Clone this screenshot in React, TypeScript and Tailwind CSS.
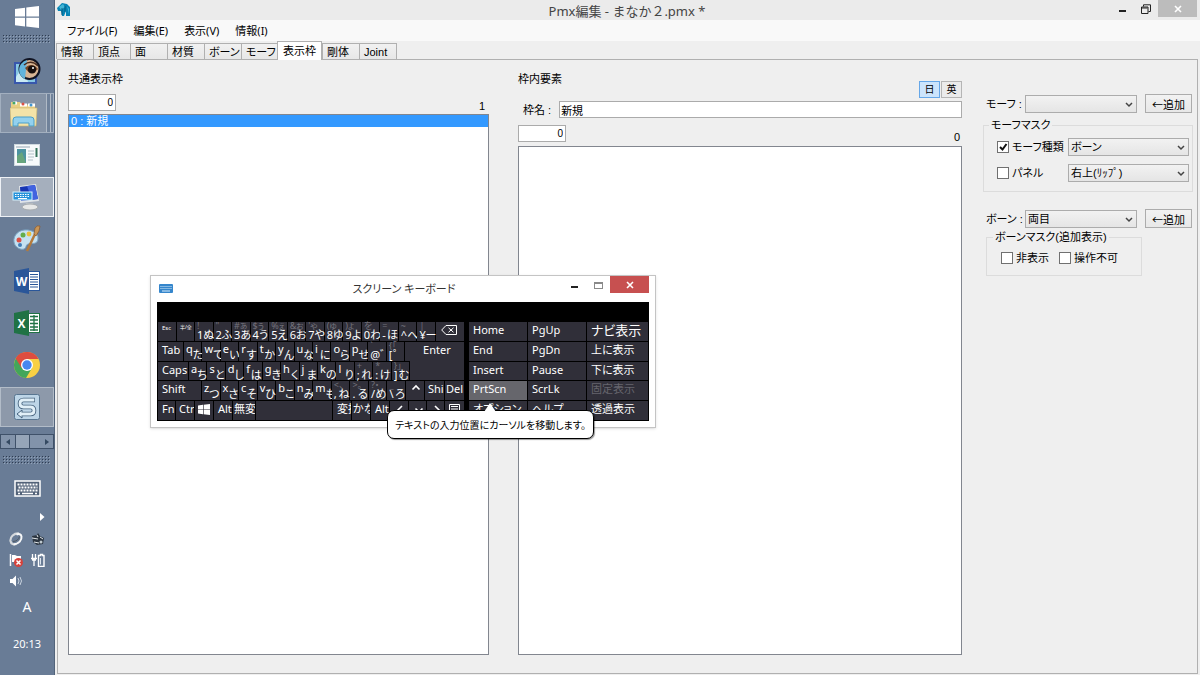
import React from "react";

type LetterKey = { main: string; kana: string; shift?: string };

const numberKeys: LetterKey[] = [
  { main: "1", kana: "ぬ", shift: "!" },
  { main: "2", kana: "ふ", shift: "\"" },
  { main: "3", kana: "あ", shift: "#ぁ" },
  { main: "4", kana: "う", shift: "$ぅ" },
  { main: "5", kana: "え", shift: "%ぇ" },
  { main: "6", kana: "お", shift: "&ぉ" },
  { main: "7", kana: "や", shift: "'ゃ" },
  { main: "8", kana: "ゆ", shift: "(ゅ" },
  { main: "9", kana: "よ", shift: ")ょ" },
  { main: "0", kana: "わ", shift: " を" },
  { main: "-", kana: "ほ", shift: "=" },
  { main: "^", kana: "へ", shift: "~" },
  { main: "¥", kana: "ー", shift: "|" },
];

const topKeys: LetterKey[] = [
  { main: "q", kana: "た" },
  { main: "w", kana: "て" },
  { main: "e", kana: "い" },
  { main: "r", kana: "す" },
  { main: "t", kana: "か" },
  { main: "y", kana: "ん" },
  { main: "u", kana: "な" },
  { main: "i", kana: "に" },
  { main: "o", kana: "ら" },
  { main: "p", kana: "せ" },
  { main: "@", kana: "゛", shift: "`" },
  { main: "[", kana: "゜", shift: "{「" },
];

const homeKeys: LetterKey[] = [
  { main: "a", kana: "ち" },
  { main: "s", kana: "と" },
  { main: "d", kana: "し" },
  { main: "f", kana: "は" },
  { main: "g", kana: "き" },
  { main: "h", kana: "く" },
  { main: "j", kana: "ま" },
  { main: "k", kana: "の" },
  { main: "l", kana: "り" },
  { main: ";", kana: "れ", shift: "+" },
  { main: ":", kana: "け", shift: "*" },
  { main: "]", kana: "む", shift: "}」" },
];

const bottomKeys: LetterKey[] = [
  { main: "z", kana: "つ" },
  { main: "x", kana: "さ" },
  { main: "c", kana: "そ" },
  { main: "v", kana: "ひ" },
  { main: "b", kana: "こ" },
  { main: "n", kana: "み" },
  { main: "m", kana: "も" },
  { main: ",", kana: "ね", shift: "<、" },
  { main: ".", kana: "る", shift: ">。" },
  { main: "/", kana: "め", shift: "?・" },
  { main: "\\", kana: "ろ", shift: "_" },
];

const keyBase = "min-w-0 overflow-hidden whitespace-nowrap bg-[#302f39] text-left text-white";

function Char({ k }: { k: LetterKey }) {
  const low = Boolean(k.shift);
  return (
    <button className="relative flex min-w-0 flex-1 justify-between whitespace-nowrap bg-[#302f39] pl-0.5 text-[11px] leading-[14px] text-white">
      {k.shift && (
        <span className="absolute left-0.5 top-[-2px] text-[9px] leading-[12px] text-[#73727b]">{k.shift}</span>
      )}
      <span className={low ? "pt-1.5" : ""}>{k.main}</span>
      <span className="pt-1.5">{k.kana}</span>
    </button>
  );
}

function Key({ w, children, className = "" }: { w: string; children?: React.ReactNode; className?: string }) {
  return (
    <button className={`${keyBase} ${w} flex shrink-0 items-start pl-1 pt-px text-[11px] leading-[14px] ${className}`}>
      {children}
    </button>
  );
}

function Nav({ children, className = "bg-[#302f39] text-[11px] text-white" }: { children: string; className?: string }) {
  return (
    <button className={`flex min-w-0 items-start overflow-hidden whitespace-nowrap pl-1 pt-px leading-[14px] ${className}`}>
      {children}
    </button>
  );
}

function Arrow({ d }: { d: string }) {
  return (
    <svg viewBox="0 0 12 12" className="mt-px size-3 shrink-0" fill="none" stroke="white" strokeWidth="1.6">
      <path d={d} />
    </svg>
  );
}

function WindowsLogo({ className }: { className: string }) {
  return (
    <svg viewBox="0 0 24 22" className={className} fill="white">
      <path d="M0 3 10 1.7V10.4H0zM11.3 1.5 24 0v10.4H11.3zM0 11.7h10v8.8L0 19.2zM11.3 11.7H24V22l-12.7-1.6z" />
    </svg>
  );
}

function KeyboardWindow() {
  return (
    <section
      aria-label="スクリーン キーボード"
      className="absolute left-[150px] top-[275px] w-[506px] border border-[#c4c4c4] bg-white px-1.5 pb-1.5 font-['Noto_Sans','Noto_Sans_CJK_JP',sans-serif] shadow-sm"
    >
      <header className="flex h-[26px] items-start">
        <div className="flex flex-1 items-center pl-0.5 pt-2">
          <svg viewBox="0 0 14 9" className="h-[9px] w-[14px]">
            <rect width="14" height="9" rx="1" fill="#3586cc" />
            <path d="M1.5 2.5h11M1.5 4.5h11" stroke="#d8ecfb" strokeDasharray="1 1" />
            <path d="M3 7h8" stroke="#d8ecfb" />
          </svg>
        </div>
        <h2 className="pt-1 text-[11px] leading-[18px] text-[#333]">スクリーン キーボード</h2>
        <div className="flex flex-1 justify-end">
          <button aria-label="最小化" className="flex h-[17px] w-6 items-center justify-center pt-1">
            <span className="h-0.5 w-[7px] bg-[#222]" />
          </button>
          <button aria-label="最大化" className="flex h-[18px] w-6 items-center justify-center">
            <span className="h-[7px] w-[9px] border border-t-2 border-[#8a8a8a]" />
          </button>
          <button aria-label="閉じる" className="flex h-[17px] w-[39px] items-center justify-center bg-[#c75050]">
            <svg viewBox="0 0 8 8" className="size-2" stroke="white" strokeWidth="1.6">
              <path d="M1 1l6 6M7 1 1 7" />
            </svg>
          </button>
        </div>
      </header>
      <div className="bg-black px-px pb-px pt-5">
        <div className="flex h-[98px] gap-[5px]">
          <div className="grid w-[306px] shrink-0 grid-cols-1 grid-rows-5 gap-px">
            <div className="flex min-h-0 gap-px">
              <button className={`${keyBase} w-[18px] shrink-0 pb-1.5 pl-1 text-[6px] leading-[8px]`}>Esc</button>
              <button className={`${keyBase} w-[17px] shrink-0 pb-2 pl-[3px] text-[5px] leading-[8px]`}>半/全</button>
              {numberKeys.map((k) => (
                <Char key={k.main} k={k} />
              ))}
              <Key w="w-[28px]" className="pl-[5px]">
                <svg viewBox="0 0 16 10" className="mt-0.5 h-[10px] w-4" fill="none" stroke="white">
                  <path d="M5 .5h10.500v9H5L.7 5zM7.500 2.800l5 4.500M12.500 2.800l-5 4.500" />
                </svg>
              </Key>
            </div>
            <div className="flex min-h-0 gap-px">
              <Key w="w-[25px]">Tab</Key>
              {topKeys.map((k) => (
                <Char key={k.main} k={k} />
              ))}
              <Key w="w-[59px]" className="pl-[18px] pt-0.5">
                Enter
              </Key>
            </div>
            <div className="flex min-h-0 gap-px">
              <Key w="w-[30px]">Caps</Key>
              {homeKeys.map((k) => (
                <Char key={k.main} k={k} />
              ))}
              <Key w="w-[54px]" className="-mt-px" />
            </div>
            <div className="flex min-h-0 gap-px">
              <Key w="w-[43px]">Shift</Key>
              {bottomKeys.map((k) => (
                <Char key={k.main} k={k} />
              ))}
              <Key w="w-[18px]">
                <Arrow d="M2.500 6.500 6 3l3.500 3.500" />
              </Key>
              <Key w="w-[19px]" className="pl-[3px]">Shi</Key>
              <Key w="w-[19px]" className="pl-px">Del</Key>
            </div>
            <div className="flex min-h-0 gap-px">
              <Key w="w-[17px]">Fn</Key>
              <Key w="w-[18px]" className="pl-[3px]">Ctr</Key>
              <Key w="w-[18px]" className="pl-[3px]">
                <WindowsLogo className="mt-0.5 h-[11px] w-3 shrink-0" />
              </Key>
              <Key w="w-[18px]" className="pl-0.5">Alt</Key>
              <Key w="w-[22px]" className="pl-px">無変</Key>
              <button aria-label="スペース" className={`${keyBase} flex-1`} />
              <Key w="w-[18px]">変換</Key>
              <Key w="w-[18px]" className="pl-px">かな</Key>
              <Key w="w-[18px]" className="pl-0.5">Alt</Key>
              <Key w="w-[18px]">
                <Arrow d="M8 3 4 7l4 4" />
              </Key>
              <Key w="w-[17px]">
                <Arrow d="M2.500 5.500 6 9l3.500-3.500" />
              </Key>
              <Key w="w-[17px]">
                <Arrow d="M4 3l4 4-4 4" />
              </Key>
              <Key w="w-[19px]">
                <svg viewBox="0 0 11 11" className="mt-0.5 size-[11px] shrink-0" fill="none" stroke="white">
                  <path d="M.5.5h10v10H.5zM2 2.500h7M2 5h7M2 7.500h7" />
                </svg>
              </Key>
            </div>
          </div>
          <div className="grid min-w-0 flex-1 grid-cols-[58px_58px_1fr] grid-rows-5 gap-px">
            <Nav>Home</Nav>
            <Nav>PgUp</Nav>
            <Nav className="bg-[#302f39] pt-[3px] text-[13px] text-white">ナビ表示</Nav>
            <Nav>End</Nav>
            <Nav>PgDn</Nav>
            <Nav>上に表示</Nav>
            <Nav>Insert</Nav>
            <Nav>Pause</Nav>
            <Nav>下に表示</Nav>
            <Nav className="bg-[#66666c] text-[11px] text-white">PrtScn</Nav>
            <Nav>ScrLk</Nav>
            <Nav className="bg-[#302f39] text-[11px] text-[#66656d]">固定表示</Nav>
            <Nav>オプション</Nav>
            <Nav>ヘルプ</Nav>
            <Nav>透過表示</Nav>
          </div>
        </div>
      </div>
      <div
        role="tooltip"
        className="absolute left-[236px] top-[134px] flex h-[29px] w-[207px] items-center justify-center rounded-[7px] border border-black bg-white shadow-[1px_1px_1px_#0006]"
      >
        <svg viewBox="0 0 12 9" className="absolute left-[96px] top-[-8px] h-[9px] w-3">
          <path d="M0 9 6 0l6 9z" fill="white" />
        </svg>
        <span className="whitespace-nowrap text-[10px] leading-[14px] text-black">
          テキストの入力位置にカーソルを移動します。
        </span>
      </div>
    </section>
  );
}

function Slot({ label, frame = "border-transparent", children }: { label: string; frame?: string; children: React.ReactNode }) {
  return (
    <div className="flex h-[42px] w-full items-center">
      <button aria-label={label} className={`flex h-10 w-full items-center justify-center border ${frame}`}>
        {children}
      </button>
    </div>
  );
}

function Dots() {
  return (
    <svg viewBox="0 0 48 8" className="h-2 w-12 shrink-0" strokeWidth="1" strokeDasharray="1 2">
      <path d="M0 .5h48M0 3.500h48M0 6.500h48" stroke="#2f3c50" />
      <path d="M1 1.500h47M1 4.500h47M1 7.500h47" stroke="#93a3b8" />
    </svg>
  );
}

function OfficeIcon({ color, letter, sheet }: { color: string; letter: string; sheet: boolean }) {
  return (
    <svg viewBox="0 0 28 26" className="h-[26px] w-7">
      <rect x="15" y="3.500" width="11.500" height="19" fill="white" stroke={color} />
      {sheet ? (
        <path d="M17 6.500h8M17 10h8M17 13.500h8M17 17h8M17 20h8M21 5v16" stroke={color} strokeWidth="1.300" />
      ) : (
        <path d="M17 6.500h8M17 9h8M17 11.500h8M17 14h8M17 16.500h8M17 19h8" stroke={color} />
      )}
      <path d="M1 3 16 0v26L1 23z" fill={color} />
      <text x="8.500" y="17.500" textAnchor="middle" fontSize="12" fontWeight="700" fontFamily="Open Sans" fill="white">
        {letter}
      </text>
    </svg>
  );
}

function Taskbar() {
  return (
    <nav
      aria-label="タスクバー"
      className="flex w-[55px] shrink-0 flex-col items-center border-r border-[#52637a] bg-[#697c96] font-['Noto_Sans',sans-serif]"
    >
      <button aria-label="スタート" className="mt-1.5 shrink-0">
        <WindowsLogo className="h-[22px] w-6" />
      </button>
      <div className="mb-[7px] mt-[7px] flex shrink-0">
        <Dots />
      </div>
      <Slot label="画像ビューア">
        <svg viewBox="0 0 28 28" className="size-7">
          <rect x="1" y="5" width="23" height="22" fill="#3857ac" />
          <rect x="3" y="7" width="19" height="18" fill="#87c8e4" />
          <path d="M3 20 10 9l5 16H3z" fill="#c9eaf4" />
          <circle cx="16.500" cy="12" r="10" fill="#d8b594" stroke="#101322" strokeWidth="2" />
          <path d="M8 7a10 10 0 0 1 6-4l-2 19a10 10 0 0 1-4-15z" fill="#62b4dc" />
          <path d="M12 11c4-4 9-4 13 1-5 5-9 5-13-1z" fill="#774625" />
          <circle cx="19" cy="12.500" r="4" fill="#180f0d" />
          <circle cx="20" cy="11" r="1" fill="white" />
          <path d="M11 8c5-4 10-3 14 1" fill="none" stroke="#4a2b1d" strokeWidth="1.500" />
        </svg>
      </Slot>
      <Slot label="エクスプローラー" frame="border-[#a2afbf] bg-[#8593a6]">
        <span className="flex h-full flex-1 justify-center">
          <svg viewBox="0 0 28 27" className="mt-1.5 h-[27px] w-7">
            <path d="M1 5V2h9l2 3 13-1v22H1z" fill="#e8cf83" />
            <path d="M3 3h4M10 5h7M18 5h7" stroke="white" strokeWidth="3" />
            <circle cx="4" cy="3" r="1.500" fill="#43a56a" />
            <circle cx="13" cy="4" r="1.500" fill="#dc5144" />
            <circle cx="21" cy="5" r="1.500" fill="#4194d0" />
            <path d="M0 8h27l-1 18H1z" fill="#f4e3a8" stroke="#cfb56c" strokeWidth=".6" />
            <path d="M3 26v-6q0-3 3-3h15q3 0 3 3v6h-5v-3H8v3z" fill="#93d1ee" stroke="#4b9fc9" />
          </svg>
        </span>
        <span className="h-full w-1 border-l border-[#b0bac6] bg-[#70829a]" />
        <span className="h-full w-[3px] border-l border-[#b0bac6] bg-[#70829a]" />
      </Slot>
      <Slot label="アプリ">
        <svg viewBox="0 0 26 22" className="h-[22px] w-[26px]">
          <rect x=".5" y=".5" width="25" height="21" fill="#f7fafb" stroke="#cfd9df" />
          <path d="M2 3h14" stroke="#c7d0d7" strokeWidth="2" />
          <rect x="3" y="5" width="9" height="14" fill="#4d93a0" />
          <path d="M3 19V12l5-4 4 11z" fill="#68a57c" />
          <path d="M14 7h6M14 10h6M14 13h6M14 16h5" stroke="#b2bfc7" />
          <rect x="21.500" y="4" width="2" height="9" fill="#36735b" />
        </svg>
      </Slot>
      <Slot label="スクリーン キーボード" frame="border-[#eef1f5] bg-[#a5afbd]">
        <svg viewBox="0 0 30 28" className="h-7 w-[30px]">
          <path d="m7 3 17-2 3 17-19 2z" fill="#e0e4e8" />
          <path d="m8 4 15-2 3 14-17 2z" fill="#1735b3" />
          <path d="m15 3 8-1 3 14-6 1z" fill="#4163e0" />
          <path d="M14 20h7l1 3H13z" fill="#bfc4c9" />
          <ellipse cx="18" cy="24" rx="8" ry="3" fill="#e7e8e7" stroke="#a6abae" />
          <rect x="1" y="9" width="19" height="8" fill="#2792da" stroke="#d4f0fc" />
          <path d="M3 11.500h15M3 13.500h15" stroke="white" strokeDasharray="1.500 1" />
          <path d="M6 15.500h9" stroke="white" />
        </svg>
      </Slot>
      <Slot label="ペイント">
        <svg viewBox="0 0 28 28" className="size-7">
          <path d="M15 5C6 4 0 10 1 17c1 6 7 8 10 7 3-1 1-4 4-5 4-1 10 1 10-6 0-5-5-7-10-8z" fill="#c5e1f1" stroke="#7ca6c5" />
          <circle cx="6" cy="15" r="2.500" fill="#db5045" />
          <circle cx="10" cy="10" r="2.500" fill="#63ad49" />
          <circle cx="16" cy="9" r="2.400" fill="#e9bd3b" />
          <circle cx="7" cy="20" r="2" fill="#437eb8" />
          <path d="m14 26 8-17" stroke="#b37a3c" strokeWidth="2.500" />
          <path d="m21 9 1-6q2-3 5-2l-1 5-3 5z" fill="#c79659" stroke="#8d582a" strokeWidth=".7" />
        </svg>
      </Slot>
      <Slot label="Word">
        <OfficeIcon color="#2a5699" letter="W" sheet={false} />
      </Slot>
      <Slot label="Excel">
        <OfficeIcon color="#207245" letter="X" sheet />
      </Slot>
      <Slot label="Chrome">
        <svg viewBox="0 0 26 26" className="size-[26px]">
          <circle cx="13" cy="13" r="13" fill="#f8d044" />
          <path d="M13 13 1.750 6.500A13 13 0 0 1 24.300 6.800H13z" fill="#dd4d3f" />
          <path d="M1.750 6.500A13 13 0 0 0 12 26l6-10-5-3z" fill="#43a65a" />
          <path d="M1.750 6.500 7.500 16 13 7h11.300A13 13 0 0 0 1.750 6.500z" fill="#dd4d3f" />
          <circle cx="13" cy="13" r="6" fill="white" />
          <circle cx="13" cy="13" r="4.700" fill="#4687ef" />
        </svg>
      </Slot>
      <Slot label="S" frame="border-[#b2bcc8] bg-[#8d99aa]">
        <svg viewBox="0 0 26 26" className="size-[26px]" fill="none">
          <rect x=".5" y=".5" width="25" height="25" rx="2" fill="#bdd5e7" stroke="#597691" />
          <path d="M21 6H9.500q-3.500 0-3.500 3.500t3.500 3.500h7q3.500 0 3.500 3.500T16.500 20H6" stroke="#47647f" strokeWidth="4.600" />
          <path d="m8 16-5 4 5 4z" fill="#e2f0f8" stroke="#47647f" />
          <path d="M20.300 6H9.500q-3.500 0-3.500 3.500t3.500 3.500h7q3.500 0 3.500 3.500T16.500 20H6" stroke="#e2f0f8" strokeWidth="2.800" />
        </svg>
      </Slot>
      <div className="mt-1.5 flex h-[15px] w-full shrink-0 border border-[#3f5169] bg-[#8293aa]">
        <button aria-label="左へ" className="flex w-[14px] items-center justify-center">
          <svg viewBox="0 0 4 6" className="h-1.5 w-1" fill="#344961"><path d="M4 0v6L0 3z" /></svg>
        </button>
        <span className="w-[15px] border-x border-[#3f5169] bg-[#96a5b8]" />
        <button aria-label="右へ" className="flex flex-1 items-center justify-end pr-1">
          <svg viewBox="0 0 4 6" className="h-1.5 w-1" fill="#344961"><path d="M0 0v6l4-3z" /></svg>
        </button>
      </div>
      <div className="mt-[7px] flex shrink-0">
        <Dots />
      </div>
      <svg viewBox="0 0 27 17" className="mt-4 h-[17px] w-[27px] shrink-0">
        <rect x="1" y="1" width="25" height="15" fill="#526278" stroke="white" strokeWidth="1.500" />
        <path d="M3.500 4.500h20M4.500 7.500h19M3.500 10.500h20" stroke="white" strokeWidth="1.800" strokeDasharray="2 1" />
        <path d="M4 13.500h2M8 13.500h11M21 13.500h2" stroke="white" strokeWidth="1.500" />
      </svg>
      <svg viewBox="0 0 5 8" className="ml-[31px] mt-4 h-2 w-[5px] shrink-0" fill="white"><path d="M0 0v8l4.500-4z" /></svg>
      <div className="mt-[11px] grid shrink-0 grid-cols-2 gap-x-2 gap-y-[7px]">
        <svg viewBox="0 0 14 14" className="size-[14px]" fill="none">
          <path d="M10 1.500C5 1 1 5 1.500 9c.5 3 3 4 6 3" stroke="#d4d8dc" strokeWidth="2.200" />
          <path d="M4.500 12.500C10 12 13 8 12.500 4.500 12 2 10 1.500 7.500 2.500" stroke="#f6f7f8" strokeWidth="2" />
          <path d="M4 9.500c3 0 6-2 6.500-5" stroke="#4e5964" />
        </svg>
        <svg viewBox="0 0 14 14" className="size-[14px]">
          <path d="M1 4l5-1 1-2 2 3 4 2-1 6-6 1-4-3z" fill="#2c3642" />
          <path d="M1 6l6 1M3 10l5 1M9 5l3 2M6 3l1 2" stroke="#e0e5e8" />
          <circle cx="10" cy="10" r="1.500" fill="#c0cad0" />
        </svg>
        <svg viewBox="0 0 14 14" className="size-[14px]">
          <path d="M1.500 1v12" stroke="white" strokeWidth="1.500" />
          <path d="M3 2h3l2 1h4v6H3z" fill="white" />
          <circle cx="9.500" cy="9.500" r="4.500" fill="#d6423b" />
          <path d="m7.500 7.500 4 4M11.500 7.500l-4 4" stroke="white" strokeWidth="1.500" />
        </svg>
        <svg viewBox="0 0 14 14" className="size-[14px]" fill="none" stroke="white">
          <path d="M1.500 1v4M4.500 1v4M0 5.500h6M1 7h4M3 7v6" strokeWidth="1.300" />
          <path d="M9.500 1.500h2v1h1.500v11H7.500v-11h2z" strokeWidth="1.400" />
          <path d="M9.500 5v6.500" stroke="#dce4ed" />
        </svg>
        <svg viewBox="0 0 14 14" className="size-[14px]">
          <path d="M1 5h2.500L7 1.500v11L3.500 9H1z" fill="white" />
          <path d="M9 4q2 3 0 6M11 3q3 4 0 8" fill="none" stroke="#c9d3df" />
        </svg>
      </div>
      <span className="mt-[9px] shrink-0 text-[14px] leading-5 text-white">A</span>
      <time className="mt-[19px] shrink-0 text-[11px] leading-4 text-white">20:13</time>
    </nav>
  );
}

function Select({ id, label, options, className }: { id: string; label?: string; options: string[]; className: string }) {
  return (
    <span className={`relative flex h-[18px] shrink-0 ${className}`}>
      <select
        id={id}
        aria-label={label}
        className="w-full appearance-none border border-[#acacac] bg-linear-to-b from-[#f2f2f2] to-[#e5e5e5] pl-0.5 text-[11px] leading-4 text-black"
      >
        {options.map((o) => (
          <option key={o}>{o}</option>
        ))}
      </select>
      <svg viewBox="0 0 8 6" className="pointer-events-none absolute right-1 top-[7px] h-1.5 w-2" fill="none" stroke="#444" strokeWidth="1.500">
        <path d="m1 1 3 3 3-3" />
      </svg>
    </span>
  );
}

function Check({ label, checked = false }: { label: string; checked?: boolean }) {
  return (
    <label className="flex items-center gap-[3px] whitespace-nowrap leading-4">
      <span className="relative flex size-3">
        <input type="checkbox" defaultChecked={checked} className="peer size-3 appearance-none border border-[#707070] bg-white" />
        <svg viewBox="0 0 12 12" className="pointer-events-none invisible absolute size-3 peer-checked:visible" fill="none" stroke="#111" strokeWidth="2">
          <path d="m3 6 2.500 2.500L9.500 3" />
        </svg>
      </span>
      {label}
    </label>
  );
}

const menus = ["ファイル(F)", "編集(E)", "表示(V)", "情報(I)"];
const tabs = ["情報", "頂点", "面", "材質", "ボーン", "モーフ", "表示枠", "剛体", "Joint"];
const numberBox = "h-[17px] w-12 border border-[#ababab] bg-white pr-0.5 text-right text-[10px] leading-4";
const addButton =
  "h-[19px] w-[47px] shrink-0 whitespace-nowrap border border-[#acacac] bg-linear-to-b from-[#f2f2f2] to-[#e8e8e8] font-['Noto_Sans_CJK_JP',sans-serif] text-[11px] leading-4";

export default function App() {
  return (
    <div className="relative flex min-h-screen overflow-hidden bg-[#efefef] text-black [font-feature-settings:'palt']">
      <Taskbar />
      <main className="flex min-w-0 flex-1 flex-col font-['Liberation_Sans','Noto_Sans_CJK_JP',sans-serif] text-[11px]">
        <header className="flex h-5 shrink-0 items-start bg-[#ebebeb] font-['Noto_Sans','Noto_Sans_CJK_JP',sans-serif]">
          <div className="flex flex-1 pl-0.5 pt-[3px]">
            <svg viewBox="0 0 14 14" className="size-[14px]">
              <path d="M0 5 5 0l5 1 3 3v9H9V8L7 13H5L4 8H1z" fill="#0784b5" />
              <path d="M2 4 6 1l2 3-4 3zM10 3l2 3v5" fill="#43b6d7" />
              <path d="M5 5v7M8 3v6" stroke="#075271" strokeWidth=".8" />
            </svg>
          </div>
          <h1 className="text-[13px] leading-[22px] text-[#444] [font-feature-settings:normal]">Pmx編集 - まなか２.pmx *</h1>
          <div className="flex flex-1 justify-end pr-[3px]">
            <button aria-label="最小化" className="flex h-[17px] w-6 items-center justify-center pt-1"><span className="h-0.5 w-[7px] bg-[#222]" /></button>
            <button aria-label="元に戻す" className="flex h-[17px] w-6 items-center justify-center">
              <svg viewBox="0 0 10 10" className="size-[10px]" fill="none" stroke="#222"><path d="M.5 3h6.500v6.500H.5zM2.500 2.500V.800h7v6.700H7.500M.5 4h6" /></svg>
            </button>
            <button aria-label="閉じる" className="flex h-[17px] w-[39px] items-center justify-center bg-[#bcbcbc]">
              <svg viewBox="0 0 8 8" className="size-2" stroke="white" strokeWidth="1.600"><path d="M1 1l6 6M7 1 1 7" /></svg>
            </button>
          </div>
        </header>
        <div role="menubar" className="flex h-[21px] shrink-0 items-center gap-4 bg-[#f9f9f9] pl-3 font-['Noto_Sans','Noto_Sans_CJK_JP',sans-serif] text-[11px] leading-5">
          {menus.map((m) => (
            <button key={m} role="menuitem">{m}</button>
          ))}
        </div>
        <div role="tablist" className="flex h-[18px] shrink-0 items-end pl-px">
          {tabs.map((t) =>
            t === "表示枠" ? (
              <button key={t} role="tab" aria-selected className="relative -mb-px -ml-px h-[19px] w-[45px] border border-b-0 border-[#b0b0b0] bg-white leading-4">
                {t}
              </button>
            ) : (
              <button key={t} role="tab" className="-mr-px h-4 w-[38px] border border-b-0 border-[#b0b0b0] bg-linear-to-b from-[#f1f1f1] to-[#e7e7e7] pl-1 text-left leading-4">
                {t}
              </button>
            ),
          )}
        </div>
        <div className="mb-px ml-0.5 mr-0.5 flex flex-1 border border-[#b0b0b0] pb-[18px] pl-[10px] pr-1 pt-[11px]">
          <section className="flex min-w-0 flex-[421] flex-col">
            <h2 className="leading-4">共通表示枠</h2>
            <div className="mt-[7px] flex h-[17px] items-start justify-between pr-1">
              <input aria-label="共通表示枠番号" defaultValue="0" className={numberBox} />
              <span className="pt-1 leading-4">1</span>
            </div>
            <ul className="mt-[3px] flex-1 border border-[#82868f] bg-white">
              <li className="h-3 bg-[#3399ff] pl-0.5 leading-3 text-white">0 : 新規</li>
            </ul>
          </section>
          <section className="ml-[29px] flex min-w-0 flex-[444] flex-col">
            <div className="flex h-[27px] items-start justify-between">
              <h2 className="leading-4">枠内要素</h2>
              <div className="flex gap-px pt-[10px]">
                <button className="h-[17px] w-[21px] border border-[#66a7e8] bg-[#cce4fc] text-[10px] leading-[14px]">日</button>
                <button className="h-[17px] w-[21px] border border-[#b5b5b5] bg-[#ebebeb] text-[10px] leading-[14px]">英</button>
              </div>
            </div>
            <div className="mt-[3px] flex h-[17px] items-center gap-2 pl-[5px]">
              <label htmlFor="frame-name" className="leading-4">枠名 :</label>
              <input id="frame-name" defaultValue="新規" className="h-[17px] min-w-0 flex-1 border border-[#ababab] bg-white px-px leading-4" />
            </div>
            <div className="mt-[7px] flex h-[17px] justify-between pr-0.5">
              <input aria-label="要素番号" defaultValue="0" className={numberBox} />
              <span className="pt-1 leading-4">0</span>
            </div>
            <div role="listbox" aria-label="枠内要素" className="mt-1 flex-1 border border-[#82868f] bg-white" />
          </section>
          <aside className="ml-[21px] w-[210px] shrink-0 pt-[23px]">
            <div className="flex items-center pl-[3px]">
              <label htmlFor="morph" className="w-[39px] leading-4">モーフ :</label>
              <Select id="morph" options={[""]} className="w-[112px]" />
              <button className={`${addButton} ml-2`}>←追加</button>
            </div>
            <fieldset className="mt-[5px] flex h-[74px] flex-col gap-2 border border-[#dcdcdc] pl-[13px] pt-1.5">
              <legend className="-ml-2 px-0.5 leading-[14px]">モーフマスク</legend>
              <div className="flex items-center">
                <div className="w-[71px]"><Check label="モーフ種類" checked /></div>
                <Select id="morph-kind" label="モーフ種類" options={["ボーン"]} className="w-[121px]" />
              </div>
              <div className="flex items-center">
                <div className="w-[71px]"><Check label="パネル" /></div>
                <Select id="panel" label="パネル" options={["右上(ﾘｯﾌﾟ)"]} className="w-[121px]" />
              </div>
            </fieldset>
            <div className="mt-[17px] flex items-center pl-[3px]">
              <label htmlFor="bone" className="w-[39px] leading-4">ボーン :</label>
              <Select id="bone" options={["両目"]} className="w-[112px]" />
              <button className={`${addButton} ml-2`}>←追加</button>
            </div>
            <fieldset className="ml-[3px] mt-0.5 flex h-[46px] w-[156px] items-start gap-[10px] border border-[#dcdcdc] pl-[14px] pt-1.5">
              <legend className="-ml-2 px-0.5 leading-[14px]">ボーンマスク(追加表示)</legend>
              <Check label="非表示" />
              <Check label="操作不可" />
            </fieldset>
          </aside>
        </div>
      </main>
      <KeyboardWindow />
    </div>
  );
}
